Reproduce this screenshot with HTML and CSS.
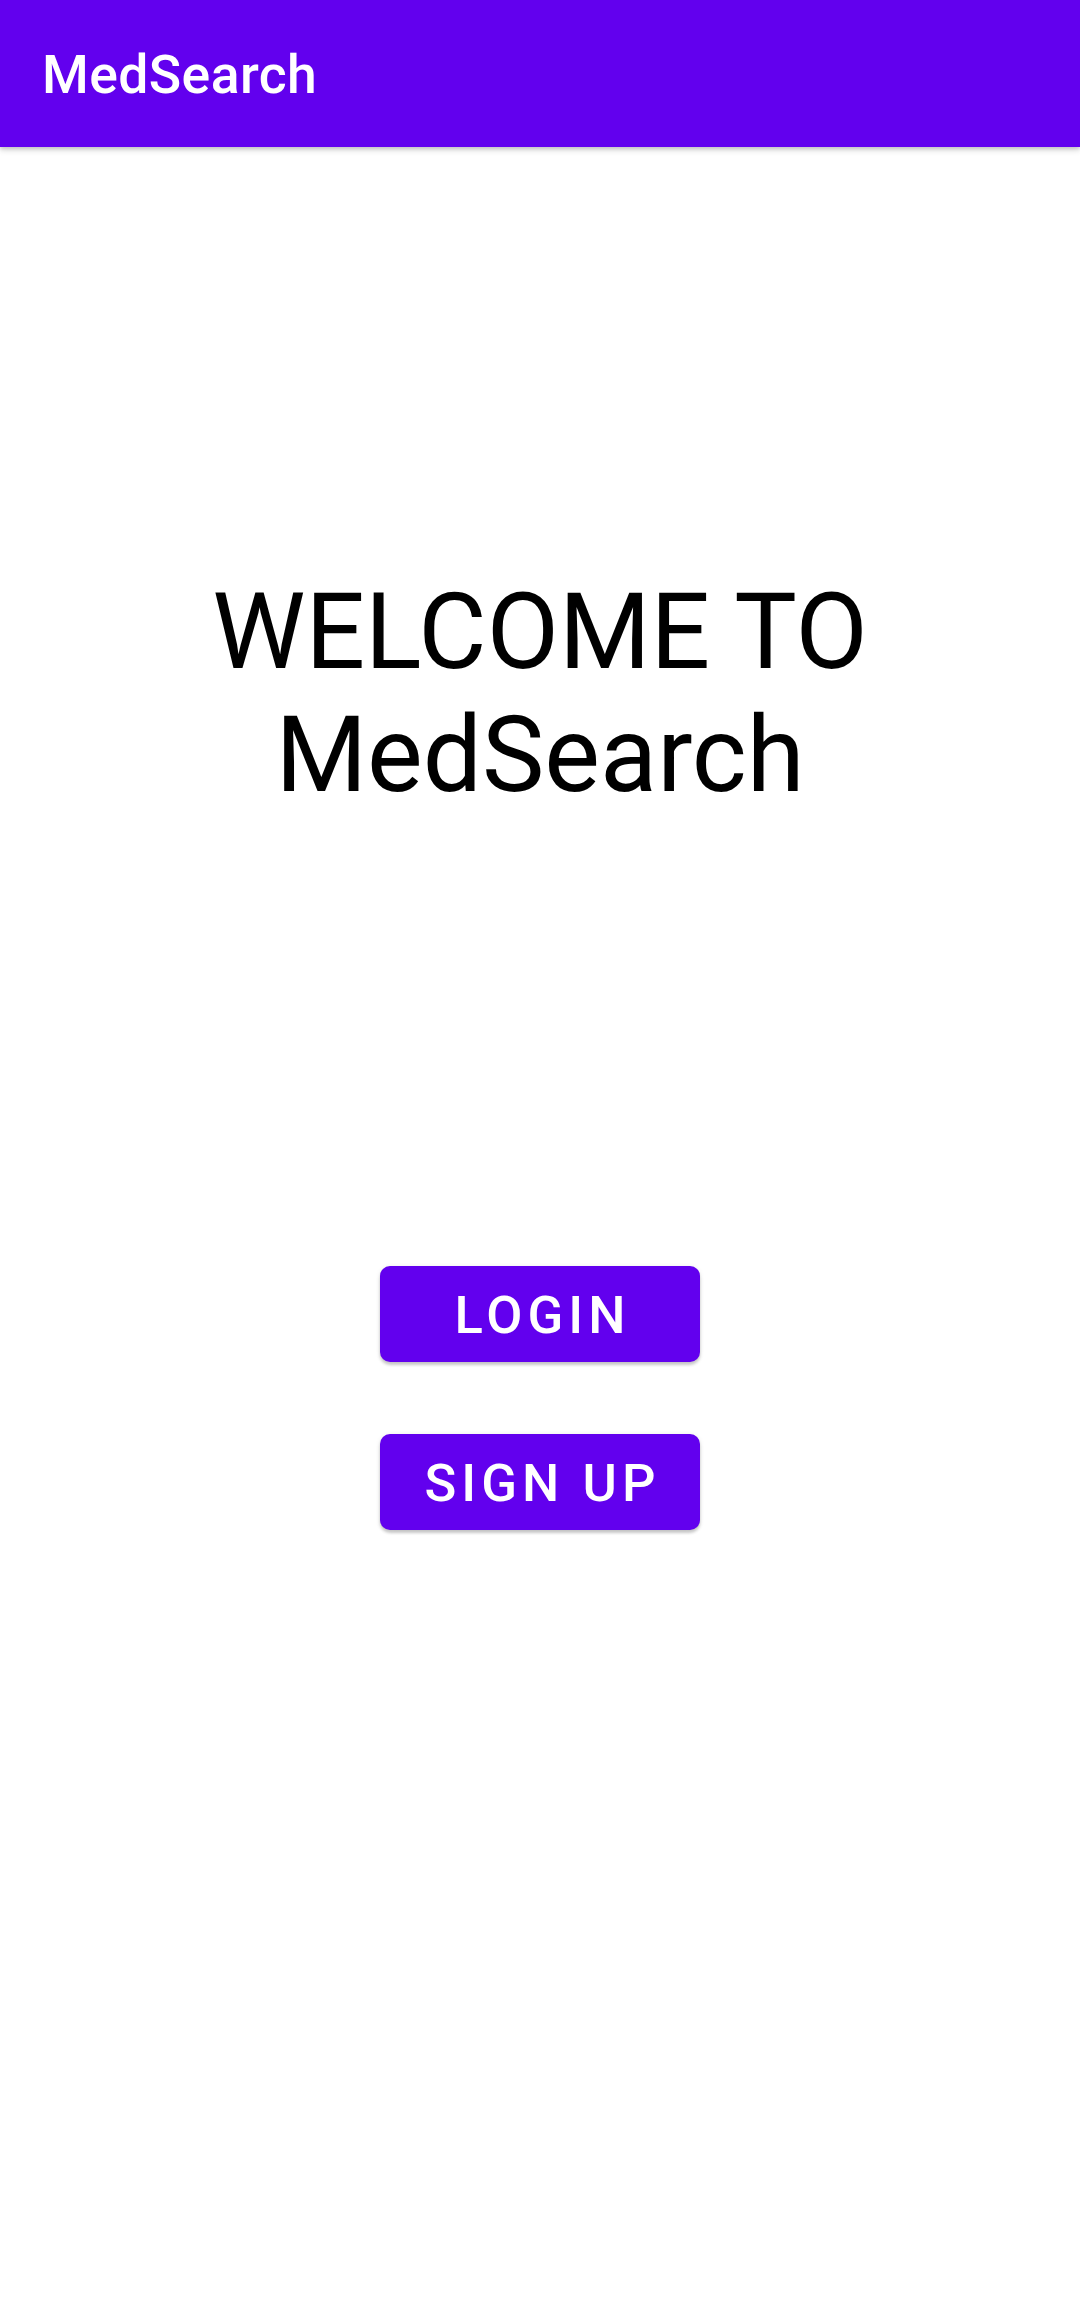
FILE: index.html
```html
<!DOCTYPE html>
<html lang="en">
<head>
<meta charset="utf-8">
<title>MedSearch</title>
<link rel="stylesheet" href="styles.css">
</head>
<body>
<header class="app-bar">
  <h1 class="app-title">MedSearch</h1>
</header>
<main class="content">
  <h2 class="welcome">WELCOME TO<br>MedSearch</h2>
  <div class="actions">
    <button class="btn" type="button">LOGIN</button>
    <button class="btn" type="button">SIGN UP</button>
  </div>
</main>
</body>
</html>
```
FILE: styles.css
```css
html, body {
  margin: 0;
  padding: 0;
  background: #ffffff;
}

body {
  font-family: Roboto, "Noto Sans", "Liberation Sans", sans-serif;
  width: 1080px;
  height: 2312px;
  overflow: hidden;
}

.app-bar {
  position: relative;
  z-index: 2;
  height: 147px;
  background: #6200ee;
  display: flex;
  align-items: center;
  padding-left: 42px;
  box-shadow: 0 3px 6px rgba(0, 0, 0, 0.16), 0 2px 3px rgba(0, 0, 0, 0.1);
}

.app-title {
  margin: 0;
  color: #ffffff;
  font-size: 53.5px;
  font-weight: 500;
  line-height: 1;
  letter-spacing: 0.4px;
  padding-top: 2px;
}

.content {
  display: flex;
  flex-direction: column;
  align-items: center;
}

.welcome {
  margin: 424px 0 0;
  font-size: 105px;
  font-weight: 400;
  line-height: 123px;
  color: #000000;
  text-align: center;
}

.actions {
  margin-top: 449px;
  display: flex;
  flex-direction: column;
  align-items: center;
  gap: 72px;
}

.btn {
  width: 320px;
  height: 96px;
  padding: 2px 0 0;
  border: none;
  border-radius: 10px;
  background: #6200ee;
  color: #ffffff;
  font-family: Roboto, "Noto Sans", "Liberation Sans", sans-serif;
  font-size: 52.5px;
  font-weight: 500;
  letter-spacing: 0.097em;
  text-indent: 0.097em;
  line-height: 1;
  box-shadow: 0 3px 3px rgba(0, 0, 0, 0.18), 0 1px 5px rgba(0, 0, 0, 0.1);
}
```
